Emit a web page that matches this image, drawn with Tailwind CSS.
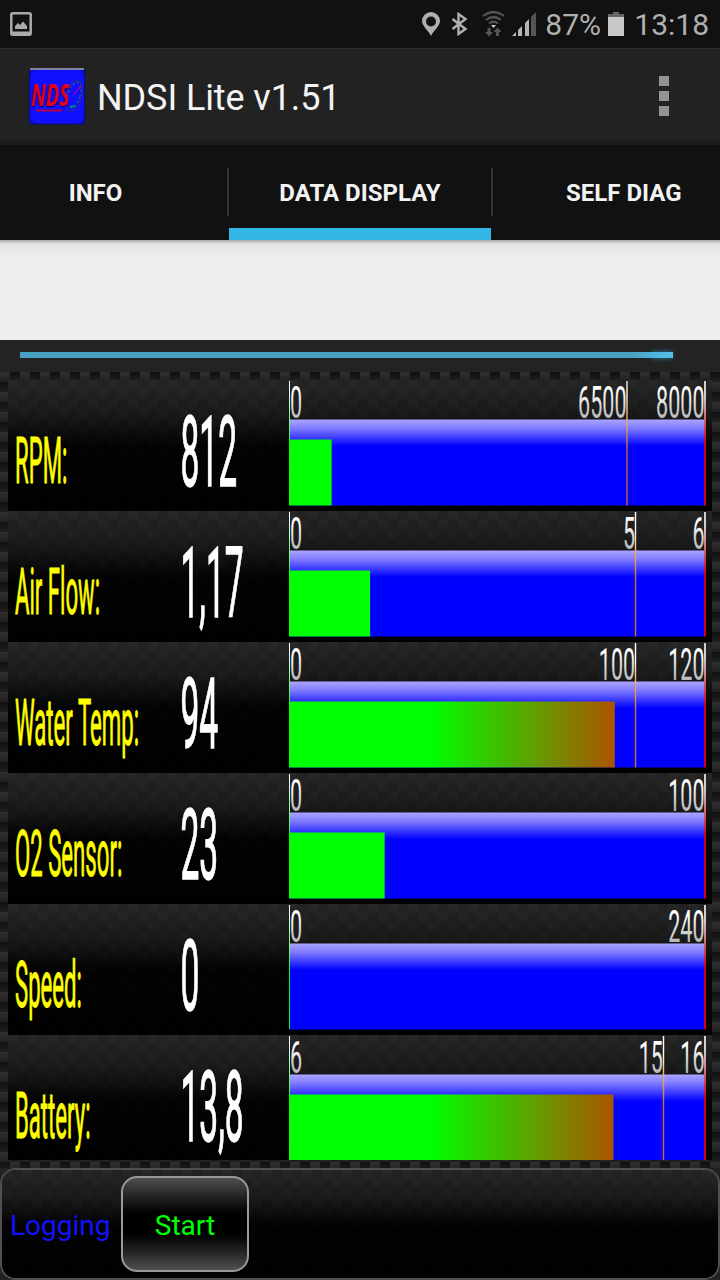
<!DOCTYPE html>
<html lang="en">
<head>
<meta charset="utf-8">
<title>NDSI Lite</title>
<script src="https://cdn.jsdelivr.net/npm/@tailwindcss/browser@4"></script>
</head>
<body class="w-[720px] h-[1280px] overflow-hidden bg-[#222] flex flex-col font-[Roboto,sans-serif] text-[#f3f3f3]">
<svg class="absolute" width="0" height="0" aria-hidden="true">
  <defs>
    <linearGradient id="blue" x1="0" y1="0" x2="0" y2="1"><stop offset="0" stop-color="#aaa5ff"/><stop offset=".1" stop-color="#807cff"/><stop offset=".31" stop-color="#0000ff"/></linearGradient>
    <linearGradient id="level" gradientUnits="userSpaceOnUse" x1="281" y1="0" x2="697" y2="0"><stop offset=".34" stop-color="#00ff00"/><stop offset="1" stop-color="#ff0000"/></linearGradient>
    <linearGradient id="digits" gradientUnits="userSpaceOnUse" x1="0" y1="-32" x2="0" y2="0"><stop offset=".15" stop-color="#fff"/><stop offset="1" stop-color="#b8b8b8"/></linearGradient>
    <linearGradient id="startline" gradientUnits="userSpaceOnUse" x1="0" y1="0" x2="0" y2="70"><stop offset=".1" stop-color="#fff"/><stop offset="1" stop-color="#00ff00"/></linearGradient>
    <linearGradient id="warnline" gradientUnits="userSpaceOnUse" x1="0" y1="0" x2="0" y2="70"><stop offset=".25" stop-color="#fff"/><stop offset=".6" stop-color="#f0a860"/><stop offset="1" stop-color="#d07020"/></linearGradient>
    <linearGradient id="endline" gradientUnits="userSpaceOnUse" x1="0" y1="0" x2="0" y2="70"><stop offset=".2" stop-color="#d0d0d0"/><stop offset=".9" stop-color="#d00018"/></linearGradient>
    <linearGradient id="shade" x1="0" y1="0" x2="0" y2="1"><stop offset="0" stop-color="#272727" stop-opacity=".8"/><stop offset=".25" stop-color="#191919" stop-opacity=".84"/><stop offset=".5" stop-color="#000" stop-opacity=".9"/><stop offset="1" stop-color="#000" stop-opacity=".98"/></linearGradient>
    <linearGradient id="ca" x1="0" y1="0" x2="0" y2="1"><stop offset="0" stop-color="#101010"/><stop offset="1" stop-color="#202020"/></linearGradient>
    <linearGradient id="cb" x1="0" y1="0" x2="0" y2="1"><stop offset="0" stop-color="#303030"/><stop offset="1" stop-color="#202020"/></linearGradient>
    <pattern id="weave" width="20" height="20" patternUnits="userSpaceOnUse">
      <rect width="20" height="20" fill="#222"/><rect width="10" height="10" fill="url(#cb)"/><rect x="10" width="10" height="10" fill="url(#ca)"/><rect y="10" width="10" height="10" fill="url(#ca)"/><rect x="10" y="10" width="10" height="10" fill="url(#cb)"/>
    </pattern>
  </defs>
</svg>

<header class="h-12 shrink-0 bg-[#111] flex items-center justify-between pl-2.5 pr-[11px] text-[#b0b0b0]">
  <svg width="22" height="24" viewBox="0 0 22 24"><rect x="1.3" y="1.3" width="19.4" height="21.4" rx="1.5" fill="none" stroke="#aaa" stroke-width="2.5"/><path d="M2 19.5h18v3H2zM5 17v-3l3-3 2 2 3-3.5 4 4.500v3z" fill="#aaa"/></svg>
  <div class="flex items-center">
    <svg width="18" height="24" viewBox="0 0 18 24"><path fill="#b0b0b0" fill-rule="evenodd" d="M9 0a9 9 0 0 0-9 9c0 5 6 9 9 15 3-6 9-10 9-15a9 9 0 0 0-9-9m0 4.500a5 5 0 1 1 0 10 5 5 0 0 1 0-10"/></svg>
    <svg class="ml-[11px]" width="18" height="24" viewBox="0 0 18 24"><path d="M1.500 7l13 10-7 5V2l7 5-13 10" fill="none" stroke="#b0b0b0" stroke-width="2.4"/></svg>
    <svg class="ml-[13px]" width="23" height="26" viewBox="0 0 23 26" fill="none" stroke="#555" stroke-width="2.200"><path d="M1 5q10.500-8 21 0M4 9q7.500-6 15 0M7 12.500q4.500-3.500 9 0"/><path d="M9 14h5l-2.500 3z" fill="#ccc" stroke="none"/><path d="M7 17v5M15.500 20v5" stroke-width="3"/><path d="M3 21h8l-4 4.500zM11.500 21h8l-4-4.500z" fill="#555" stroke="none"/></svg>
    <svg class="ml-[7px]" width="24" height="24" viewBox="0 0 24 24" fill="#b5b5b5"><path d="M0 24l4-4v4zM6 18l4-4v10H6zM13 11l4-4v17h-4z"/><path d="M19 5l5-5v24h-5z" fill="#555"/></svg>
    <span class="ml-[9px] w-[60px] text-[30px] leading-[48px] whitespace-nowrap pt-px">87%</span>
    <svg class="ml-[3px]" width="16" height="24" viewBox="0 0 16 24"><path d="M5 0h6v2h5v3H0V2h5z" fill="#666"/><path d="M0 5h16v19H0z" fill="#c8c8c8"/></svg>
    <span class="ml-[10px] text-[30px] leading-[48px] whitespace-nowrap pt-px">13:18</span>
  </div>
</header>

<div class="h-[97px] shrink-0 border-t border-[#303030] bg-[#222] shadow-[inset_0_-4px_0_#1c1c1c] flex items-center pl-[29px] pr-[51px] pb-0.5">
  <svg width="56" height="57" viewBox="0 0 56 57">
    <defs><radialGradient id="ico" r=".72"><stop offset=".8" stop-color="#1010ff"/><stop offset="1" stop-color="#0808a0"/></radialGradient></defs>
    <rect x=".5" y="1" width="55" height="55" rx="2" fill="url(#ico)" stroke="#080880"/><path d="M1 1h54" stroke="#aaa" stroke-width="1.300"/>
    <g transform="rotate(18 45 27)" fill="none"><ellipse cx="45" cy="28" rx="7.500" ry="15.500" stroke="#292994" stroke-width="1.500"/><ellipse cx="45" cy="27" rx="6" ry="13" stroke="#07877c" stroke-width="1.200" stroke-dasharray="1.500 3"/></g>
    <path d="M44 27l8-9" stroke="#a000a0" stroke-width="1.200"/><path d="M41 38l5-1v2l-5 1z" fill="#009070"/>
    <text transform="translate(3 38.500) scale(.65 1)" font-family="Open Sans" font-size="30" font-weight="700" font-style="italic" fill="#000060">NDS</text>
    <text transform="translate(2 38) scale(.65 1)" font-family="Open Sans" font-size="30" font-weight="700" font-style="italic" fill="#e0001b">NDS</text>
    <path d="M7 42.500h26" stroke="#b8003c" stroke-width="2"/>
  </svg>
  <h1 class="ml-3 pt-1 text-[36px] leading-[48px] tracking-[-0.100px] grow whitespace-nowrap">NDSI Lite v1.51</h1>
  <div class="flex flex-col gap-[5px]"><i class="size-2.5 bg-[#929292]"></i><i class="size-2.5 bg-[#929292]"></i><i class="size-2.5 bg-[#929292]"></i></div>
</div>

<nav class="h-[95px] shrink-0 bg-[#111] flex text-2xl font-bold">
  <div class="w-[227px] flex items-center justify-center pr-9">INFO</div>
  <div class="w-0.5 h-12 mt-[23px] bg-[#333]"></div>
  <div class="w-[262px] border-b-[12px] border-[#33b5e5] pt-3 flex items-center justify-center whitespace-nowrap">DATA DISPLAY</div>
  <div class="w-0.5 h-12 mt-[23px] bg-[#333]"></div>
  <div class="flex items-center pl-[73px] whitespace-nowrap">SELF DIAG</div>
</nav>
<div class="h-[100px] shrink-0 bg-[#eee] bg-linear-to-b from-[#aaa] via-[#e4e4e4] via-[4px] to-[#eee] to-[20px]"></div>
<div class="h-8 shrink-0 bg-[#232323]">
  <svg width="720" height="32"><defs><linearGradient id="seek"><stop offset=".93" stop-color="#479fc1"/><stop offset="1" stop-color="#53bfec"/></linearGradient><filter id="glow" x="-20%" y="-100%" width="140%" height="300%"><feGaussianBlur stdDeviation="2"/></filter></defs><rect x="652" y="11" width="20" height="8" fill="#278ab0" opacity=".6" filter="url(#glow)"/><rect x="20" y="12" width="653" height="6" fill="url(#seek)"/></svg>
</div>

<main class="h-[796px] shrink-0 relative">
  <svg class="absolute inset-0" width="720" height="796"><rect width="720" height="796" fill="url(#weave)"/></svg>
  <div id="gauges" class="relative mx-2 pt-2 h-[788px] overflow-hidden flex flex-col"></div>
</main>

<footer class="h-28 shrink-0 relative rounded-[16px] border-2 border-[#505050] overflow-hidden bg-black">
  <svg class="absolute inset-0" width="716" height="108"><rect width="716" height="108" fill="url(#weave)"/><rect width="716" height="108" fill="url(#shade)"/></svg>
  <div class="relative flex items-center h-full pl-2">
    <span class="w-[111px] pt-1 text-[28px] text-[#1111ff]">Logging</span>
    <button class="w-32 h-24 pt-1 rounded-[16px] border-2 border-[#999] bg-linear-to-b from-[#505050] via-black to-[#505050] text-[28px] text-[#00ff00]">Start</button>
  </div>
</footer>

<script>
const gauges = [
  {label:'RPM:', value:'812', min:'0', warn:'6500', max:'8000', fill:.1025, at:.8125, thick:1},
  {label:'Air Flow:', value:'1,17', min:'0', warn:'5', max:'6', fill:.195, at:.8333},
  {label:'Water Temp:', value:'94', min:'0', warn:'100', max:'120', fill:.7833, at:.8333},
  {label:'O2 Sensor:', value:'23', min:'0', max:'100', fill:.23},
  {label:'Speed:', value:'0', min:'0', max:'240', fill:0},
  {label:'Battery:', value:'13,8', min:'6', warn:'15', max:'16', fill:.78, at:.9}
];
const small = (x, t, a) => `<text transform="translate(${x} 38) scale(.49 1)" font-size="44" text-anchor="${a}" fill="url(#digits)">${t}</text>`;
document.getElementById('gauges').innerHTML = gauges.map(g => {
  const wx = 281 + 416 * (g.at || 0);
  return `<svg class="shrink-0 block overflow-visible" width="704" height="131" font-family="Roboto">
  <rect width="704" height="131" fill="url(#weave)"/><rect width="704" height="131" fill="url(#shade)"/>
  <text transform="translate(7 102.800) scale(.341 1)" font-size="65" fill="#ffff00" stroke="#ffff00" stroke-width=".9">${g.label}</text>
  <text transform="translate(172.500 105.800) scale(.341 1)" font-size="98.500" fill="#fff" stroke="#fff" stroke-width="1.400">${g.value}</text>
  <rect x="281" y="39.500" width="416" height="86" fill="url(#blue)"/>
  <rect x="281" y="1" width="1" height="124" fill="url(#startline)"/>
  ${g.fill ? `<rect x="281" y="59.500" width="${416 * g.fill}" height="66" fill="url(#level)"/>` : ''}
  ${small(282, g.min, 'start')}
  ${g.warn ? small(wx - .5, g.warn, 'end') + `<rect x="${g.thick ? 618 : Math.floor(wx) - .2}" y="1" width="${g.thick ? 2 : 1.4}" height="124.500" fill="url(#warnline)" opacity="${g.thick ? .65 : 1}"/>` : ''}
  ${small(696.5, g.max, 'end')}
  <rect x="696" y="1" width="2" height="124.500" fill="url(#endline)"/>
</svg>`;
}).join('');
</script>
</body>
</html>
